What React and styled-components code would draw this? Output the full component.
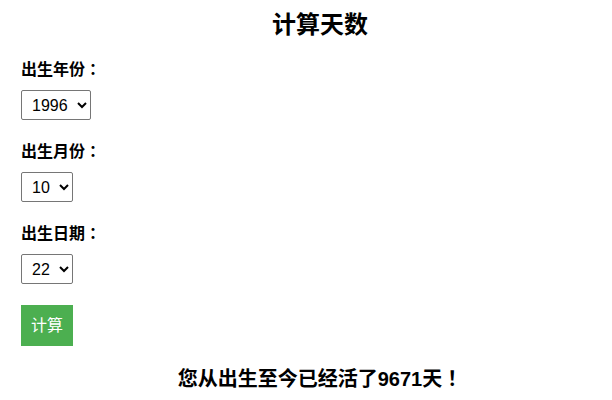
import React, { useState } from "react";
import styled, { createGlobalStyle } from "styled-components";

const Global = createGlobalStyle`
  html, body { margin: 0; padding: 0; background: #fff; overflow: hidden; }
  body { font-family: "Liberation Sans", "Noto Sans CJK SC", sans-serif; color: #000; }
`;

const Page = styled.div`
  width: 598px;
  padding: 9px 0 0 21px;
`;

const Title = styled.h2`
  margin: 0 0 19px;
  font-size: 24px;
  line-height: 32px;
  font-weight: bold;
  text-align: center;
`;

const Field = styled.div`
  margin-bottom: 22px;
`;

const Label = styled.label`
  display: block;
  margin-bottom: 10px;
  font-size: 16px;
  line-height: 20px;
  font-weight: bold;
`;

const Punct = styled.span`
  font-family: "Noto Sans CJK TC", "Noto Sans CJK SC", sans-serif;
  line-height: 0;
`;

const Select = styled.select`
  display: block;
  height: 30px;
  padding: 0 6px 0 6px;
  font-family: "Liberation Sans", Arial, sans-serif;
  font-size: 16px;
  color: #000;
  background: #fff;
  border: 1px solid #767676;
  border-radius: 2px;
`;

const Button = styled.button`
  display: block;
  margin-top: -1px;
  padding: 10px;
  height: 41px;
  background: #4caf50;
  color: #fff;
  border: none;
  font-family: "Liberation Sans", "Noto Sans CJK SC", sans-serif;
  font-size: 16px;
  line-height: 21px;
  cursor: pointer;
`;

const Result = styled.h3`
  margin: 20px 0 0;
  font-size: 20px;
  line-height: 26px;
  font-weight: bold;
  text-align: center;
`;

const years = Array.from({ length: 100 }, (_, i) => 1950 + i);
const months = Array.from({ length: 12 }, (_, i) => i + 1);
const days = Array.from({ length: 31 }, (_, i) => i + 1);

export default function App() {
  const [y, setY] = useState(1996);
  const [m, setM] = useState(10);
  const [d, setD] = useState(22);
  return (
    <>
      <Global />
      <Page>
        <Title>计算天数</Title>
        <Field>
          <Label>出生年份<Punct>：</Punct></Label>
          <Select value={y} onChange={(e) => setY(+e.target.value)}>
            {years.map((v) => (
              <option key={v} value={v}>{v}</option>
            ))}
          </Select>
        </Field>
        <Field>
          <Label>出生月份<Punct>：</Punct></Label>
          <Select value={m} onChange={(e) => setM(+e.target.value)}>
            {months.map((v) => (
              <option key={v} value={v}>{v}</option>
            ))}
          </Select>
        </Field>
        <Field>
          <Label>出生日期<Punct>：</Punct></Label>
          <Select value={d} onChange={(e) => setD(+e.target.value)}>
            {days.map((v) => (
              <option key={v} value={v}>{v}</option>
            ))}
          </Select>
        </Field>
        <Button>计算</Button>
        <Result>您从出生至今已经活了9671天<Punct>！</Punct></Result>
      </Page>
    </>
  );
}
